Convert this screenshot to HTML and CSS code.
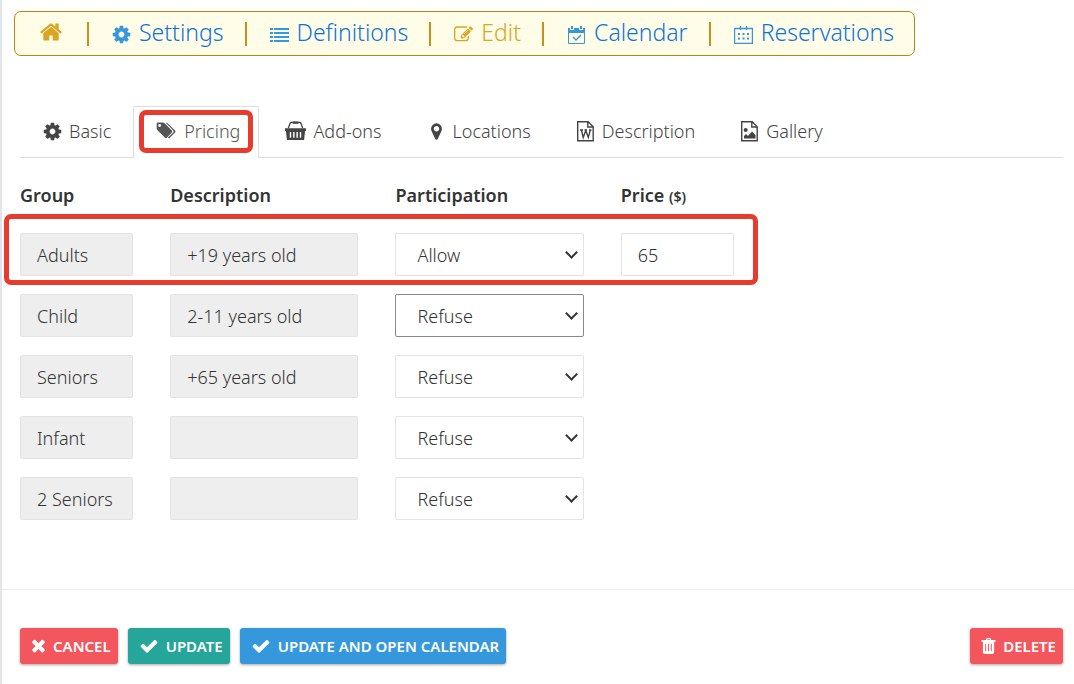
FILE: index.html
```
<!DOCTYPE html>
<html lang="en">

<head>
    <meta charset="utf-8">
    <title>Pricing</title>
    <link rel="stylesheet" href="styles.css">
</head>

<body>
    <nav class="menu">
        <a class="gold home" href="#" aria-label="Home"><svg class="icon_home" viewBox="0 0 1792 1792"><path d="M1472 992v480q0 26-19 45t-45 19h-384v-384h-256v384h-384q-26 0-45-19t-19-45v-480q0-1 .5-3t.5-3l575-474 575 474q1 2 1 6zm223-69l-62 74q-8 9-21 11h-3q-13 0-21-7l-692-577-692 577q-12 8-24 7-13-2-21-11l-62-74q-8-10-7-23.5t11-21.5l719-599q32-26 76-26t76 26l244 204v-195q0-14 9-23t23-9h192q14 0 23 9t9 23v408l219 182q10 8 11 21.5t-7 23.5z"/></svg></a>
        <span class="line"></span>
        <a href="#"><svg viewBox="64 64 1664 1664"><path d="M1152 896q0-106-75-181t-181-75-181 75-75 181 75 181 181 75 181-75 75-181zm512-109v222q0 12-8 23t-20 13l-185 28q-19 54-39 91 35 50 107 138 10 12 10 25t-9 23q-27 37-99 108t-94 71q-12 0-26-9l-138-108q-44 23-91 38-16 136-29 186-7 28-36 28h-222q-14 0-24.5-8.5t-11.5-21.5l-28-184q-49-16-90-37l-141 107q-10 9-25 9-14 0-25-11-126-114-165-168-7-10-7-23 0-12 8-23 15-21 51-66.5t54-70.5q-27-50-41-99l-183-27q-13-2-21-12.5t-8-23.5v-222q0-12 8-23t19-13l186-28q14-46 39-92-40-57-107-138-10-12-10-24 0-10 9-23 26-36 98.5-107.5t94.5-71.5q13 0 26 10l138 107q44-23 91-38 16-136 29-186 7-28 36-28h222q14 0 24.5 8.5t11.5 21.5l28 184q49 16 90 37l142-107q9-9 24-9 13 0 25 10 129 119 165 170 7 8 7 22 0 12-8 23-15 21-51 66.5t-54 70.5q26 50 41 98l183 28q13 2 21 12.5t8 23.5z"/></svg>Settings</a>
        <span class="line"></span>
        <a href="#"><svg viewBox="0 0 19 19"><path d="M0 3h3v2H0zM4 3h15v2H4zM0 7h3v2H0zM4 7h15v2H4zM0 11h3v2H0zM4 11h15v2H4zM0 15h3v2H0zM4 15h15v2H4z"/></svg>Definitions</a>
        <span class="line"></span>
        <a class="gold" href="#"><svg viewBox="0 0 1792 1792"><path d="M888 1184l116-116-152-152-116 116v56h96v96h56zm440-720q-16-16-33 1l-350 350q-17 17-1 33t33-1l350-350q17-17 1-33zm80 594v190q0 119-84.5 203.5t-203.5 84.5h-832q-119 0-203.5-84.5t-84.5-203.5v-832q0-119 84.5-203.5t203.5-84.5h832q63 0 117 25 15 7 18 23 3 17-9 29l-49 49q-14 14-32 8-23-6-45-6h-832q-66 0-113 47t-47 113v832q0 66 47 113t113 47h832q66 0 113-47t47-113v-126q0-13 9-22l64-64q15-15 35-7t20 29zm-96-738l288 288-672 672h-288v-288zm444 132l-92 92-288-288 92-92q28-28 68-28t68 28l152 152q28 28 28 68t-28 68z"/></svg>Edit</a>
        <span class="line"></span>
        <a href="#"><svg viewBox="0 0 19 19"><path d="M1 3h2v2h4V3h5v2h4V3h2v15a1 1 0 0 1-1 1H2a1 1 0 0 1-1-1zM2 8v10h15V8zM4 1h2v3H4zM13 1h2v3h-2z"/><path class="stroke" d="M6 12l3 3 5-5"/></svg>Calendar</a>
        <span class="line"></span>
        <a href="#"><svg viewBox="0 0 19 19"><path class="stroke" d="M.5 3.500h18v15H.5zM6.500 1v4M12.500 1v4"/><path d="M4 8h2v2H4zM8.500 8h2v2h-2zM13 8h2v2h-2zM4 12.500h2v2H4zM8.500 12.500h2v2h-2zM13 12.500h2v2h-2z"/></svg>Reservations</a>
    </nav>

    <div class="tabs">
        <a class="tab" href="#"><svg viewBox="64 64 1664 1664"><path d="M1152 896q0-106-75-181t-181-75-181 75-75 181 75 181 181 75 181-75 75-181zm512-109v222q0 12-8 23t-20 13l-185 28q-19 54-39 91 35 50 107 138 10 12 10 25t-9 23q-27 37-99 108t-94 71q-12 0-26-9l-138-108q-44 23-91 38-16 136-29 186-7 28-36 28h-222q-14 0-24.500-8.500t-11.500-21.500l-28-184q-49-16-90-37l-141 107q-10 9-25 9-14 0-25-11-126-114-165-168-7-10-7-23 0-12 8-23 15-21 51-66.500t54-70.500q-27-50-41-99l-183-27q-13-2-21-12.500t-8-23.500v-222q0-12 8-23t19-13l186-28q14-46 39-92-40-57-107-138-10-12-10-24 0-10 9-23 26-36 98.500-107.500t94.500-71.500q13 0 26 10l138 107q44-23 91-38 16-136 29-186 7-28 36-28h222q14 0 24.500 8.500t11.500 21.500l28 184q49 16 90 37l142-107q9-9 24-9 13 0 25 10 129 119 165 170 7 8 7 22 0 12-8 23-15 21-51 66.500t-54 70.500q26 50 41 98l183 28q13 2 21 12.500t8 23.500z"/></svg>Basic</a>
        <a class="tab active" href="#"><svg class="wide" viewBox="0 0 22 20"><path d="M2 1h5q1.200 0 2 .8l7.600 7.800q.9.900 0 1.900l-5.300 5.600q-.9.900-1.900 0L1.600 9.300Q.7 8.400.7 7.200V2.300Q.7 1 2 1zm1.800 1.700a1.500 1.500 0 1 0 0 3 1.500 1.500 0 0 0 0-3z"/><path d="M10 1q1.300 0 2.200.9l7.800 7.700q1 1 0 2L14.500 17q-1.100 1-2.200.1l5.800-5.600q1-1 0-2z"/></svg>Pricing</a>
        <a class="tab" href="#"><svg class="wide" viewBox="0 0 22 20"><path d="M0 7h22v3h-1l-1 9.500H2L1 10H0zM5 11v6h1.500v-6zM8.500 11v6H10v-6zM12 11v6h1.500v-6zM15.500 11v6H17v-6z" fill-rule="evenodd"/><path class="stroke" d="M3.500 7L5.500 1.500Q5.800 1 6.500 1h9q.7 0 1 .5l2 5.500"/><path d="M8 0h6v2.500H8z"/></svg>Add-ons</a>
        <a class="tab" href="#"><svg viewBox="0 0 1792 1792"><path d="M1152 640q0-106-75-181t-181-75-181 75-75 181 75 181 181 75 181-75 75-181zm256 0q0 109-33 179l-364 774q-16 33-47.500 52t-67.500 19-67.500-19-46.500-52l-365-774q-33-70-33-179 0-212 150-362t362-150 362 150 150 362z"/></svg>Locations</a>
        <a class="tab" href="#"><svg class="file" viewBox="0 0 19 21"><path class="stroke" d="M1.700.7h10.500l5 5v14H1.700zM11.800.7V6h5.500"/><path class="stroke" d="M4 9h3M8.500 9h2.500M13 9h2.500M5.500 9l1.700 7.500L9.800 9.500l2.500 7L14.300 9"/></svg>Description</a>
        <a class="tab" href="#"><svg class="file" viewBox="0 0 19 21"><path class="stroke" d="M1.700.7h10.500l5 5v14H1.700zM11.800.7V6h5.500"/><circle cx="5.700" cy="9" r="2"/><path d="M4 17.500V15l2-2 2 2 4-4.500 3.500 3.500v3.500z"/></svg>Gallery</a>
    </div>

    <table class="prices">
        <thead>
            <tr>
                <th class="small">Group</th>
                <th class="large">Description</th>
                <th class="large">Participation</th>
                <th class="small">Price <span class="currency">($)</span></th>
                <td></td>
            </tr>
        </thead>
        <tbody>
            <tr class="marked">
                <td><input type="text" aria-label="Group" value="Adults" readonly></td>
                <td><input type="text" aria-label="Description" value="+19 years old" readonly></td>
                <td><div class="select"><select aria-label="Participation"><option selected>Allow</option><option>Refuse</option></select></div></td>
                <td><input type="text" aria-label="Price" value="65"></td>
                <td></td>
            </tr>
            <tr>
                <td><input type="text" aria-label="Group" value="Child" readonly></td>
                <td><input type="text" aria-label="Description" value="2-11 years old" readonly></td>
                <td><div class="select current"><select aria-label="Participation"><option>Allow</option><option selected>Refuse</option></select></div></td>
            </tr>
            <tr>
                <td><input type="text" aria-label="Group" value="Seniors" readonly></td>
                <td><input type="text" aria-label="Description" value="+65 years old" readonly></td>
                <td><div class="select"><select aria-label="Participation"><option>Allow</option><option selected>Refuse</option></select></div></td>
            </tr>
            <tr>
                <td><input type="text" aria-label="Group" value="Infant" readonly></td>
                <td><input type="text" aria-label="Description" value="" readonly></td>
                <td><div class="select"><select aria-label="Participation"><option>Allow</option><option selected>Refuse</option></select></div></td>
            </tr>
            <tr>
                <td><input type="text" aria-label="Group" value="2 Seniors" readonly></td>
                <td><input type="text" aria-label="Description" value="" readonly></td>
                <td><div class="select"><select aria-label="Participation"><option>Allow</option><option selected>Refuse</option></select></div></td>
            </tr>
        </tbody>
    </table>

    <div class="actions">
        <button class="button red"><svg viewBox="200 200 1392 1492"><path d="M1490 1322q0 40-28 68l-136 136q-28 28-68 28t-68-28l-294-294-294 294q-28 28-68 28t-68-28l-136-136q-28-28-28-68t28-68l294-294-294-294q-28-28-28-68t28-68l136-136q28-28 68-28t68 28l294 294 294-294q28-28 68-28t68 28l136 136q28 28 28 68t-28 68l-294 294 294 294q28 28 28 68z"/></svg>CANCEL</button>
        <button class="button green"><svg class="check" viewBox="64 64 1664 1664"><path d="M1671 566q0 40-28 68l-724 724-136 136q-28 28-68 28t-68-28l-136-136-362-362q-28-28-28-68t28-68l136-136q28-28 68-28t68 28l294 295 656-657q28-28 68-28t68 28l136 136q28 28 28 68z"/></svg>UPDATE</button>
        <button class="button blue"><svg class="check" viewBox="64 64 1664 1664"><path d="M1671 566q0 40-28 68l-724 724-136 136q-28 28-68 28t-68-28l-136-136-362-362q-28-28-28-68t28-68l136-136q28-28 68-28t68 28l294 295 656-657q28-28 68-28t68 28l136 136q28 28 28 68z"/></svg>UPDATE AND OPEN CALENDAR</button>
        <button class="button red delete"><svg viewBox="0 0 16 17"><path fill-rule="evenodd" d="M5 2L5.600.7Q6 0 6.800 0h2.400q.8 0 1.200.7L11 2h4.500v2H14v11q0 2-2 2H4q-2 0-2-2V4H.5V2zM6.500 2h3L9 1.200H7zM4.500 6v8h1V6zM7.500 6v8h1V6zM10.500 6v8h1V6z"/></svg>DELETE</button>
    </div>
</body>

</html>
```
FILE: styles.css
```
*,
*::after {
    box-sizing: border-box;
}

body {
    margin: 0;
    padding-top: 11px;
    min-height: 100vh;
    border-left: 2px solid #e3e3eb;
    background-color: #fff;
    color: #333;
    font-family: "Noto Sans", "Open Sans", sans-serif;
    font-size: 18px;
    font-weight: 300;
}

svg {
    width: 19px;
    height: 19px;
    flex: none;
    fill: currentColor;
}

.stroke {
    fill: none;
    stroke: currentColor;
    stroke-width: 1.4;
}

.menu {
    display: inline-flex;
    align-items: center;
    height: 45px;
    margin-left: 12px;
    padding: 0 20px 0 24px;
    border: 1px solid #b8860b;
    border-radius: 7px;
    background-color: #fffce8;
    font-size: 23px;
    line-height: 32px;
    vertical-align: top;
}

.menu a {
    display: flex;
    align-items: center;
    gap: 8px;
    padding-bottom: 3px;
    color: #0d74d8;
    text-decoration: none;
}

.menu .home {
    margin-right: 3px;
}

.menu svg {
    margin-top: 4px;
    color: #3598dc;
}

.menu .gold,
.menu .gold svg {
    color: #daa520;
}

.menu .icon_home {
    width: 24px;
    height: 24px;
    margin-top: 0;
}

.line {
    width: 2px;
    height: 24px;
    margin: 0 23px 0 21px;
    background-color: #c98f1c;
}

.tabs {
    display: flex;
    margin: 50px 11px 0 18px;
    border-bottom: 1px solid #ddd;
}

.tab {
    display: flex;
    align-items: center;
    gap: 7px;
    height: 51px;
    margin-right: 3px;
    padding: 0 18px 2px 22px;
    border: 1px solid transparent;
    border-bottom: 0;
    color: #444;
    text-decoration: none;
}

.tab .wide {
    width: 21px;
    height: 20px;
}

.tab .file {
    height: 21px;
}

.tab.active {
    position: relative;
    height: 52px;
    margin-bottom: -1px;
    padding-bottom: 3px;
    border-color: #ddd;
    border-radius: 2px 2px 0 0;
    background-color: #fff;
    color: #555;
}

.tab.active::after,
.marked::after {
    content: "";
    position: absolute;
    border: 5px solid #e63c30;
    border-radius: 7px;
    pointer-events: none;
}

.tab.active::after {
    inset: 3px 5px 5px 5px;
}

.prices {
    width: calc(100% - 29px);
    margin: 25px 11px 0 18px;
    border-collapse: collapse;
    table-layout: fixed;
}

.prices th {
    height: 50px;
    padding: 0;
    font-weight: 600;
    line-height: 24px;
    text-align: left;
    vertical-align: top;
}

.small {
    width: 14.4%;
}

.large {
    width: 21.6%;
}

.currency {
    font-size: 14px;
}

.prices td {
    padding: 0 37px 18px 0;
}

.marked {
    position: relative;
}

.marked::after {
    top: -19px;
    bottom: 9px;
    left: -16px;
    width: calc(72% + 3px);
}

input,
select {
    display: block;
    width: 100%;
    height: 43px;
    padding: 0 16px;
    border: 1px solid #e3e3e3;
    border-radius: 2px;
    background-color: #fff;
    color: #333;
    font: inherit;
}

input:read-only {
    background-color: #eee;
}

.select {
    position: relative;
}

select {
    appearance: none;
    padding: 0 21px;
}

.select::after {
    content: "";
    position: absolute;
    top: 15px;
    right: 8px;
    width: 9px;
    height: 9px;
    border: solid #333;
    border-width: 0 2px 2px 0;
    transform: rotate(45deg);
    pointer-events: none;
}

.current select {
    border-color: #888;
}

.actions {
    display: flex;
    gap: 10px;
    margin-top: 51px;
    padding: 38px 11px 20px 18px;
    border-top: 1px solid #eee;
}

.button {
    display: flex;
    align-items: center;
    gap: 7px;
    height: 36px;
    padding: 0 7px 0 11px;
    border: 0;
    border-radius: 3px;
    box-shadow: 0 1px 3px rgba(0, 0, 0, .35);
    color: #fff;
    font: 600 15px "Noto Sans", "Open Sans", sans-serif;
}

.button svg {
    width: 15px;
    height: 16px;
}

.button .check {
    width: 20px;
    height: 18px;
}

.red {
    background-color: #f3565d;
}

.green {
    background-color: #26a69a;
}

.blue {
    background-color: #3598dc;
}

.delete {
    margin-left: auto;
}
```
